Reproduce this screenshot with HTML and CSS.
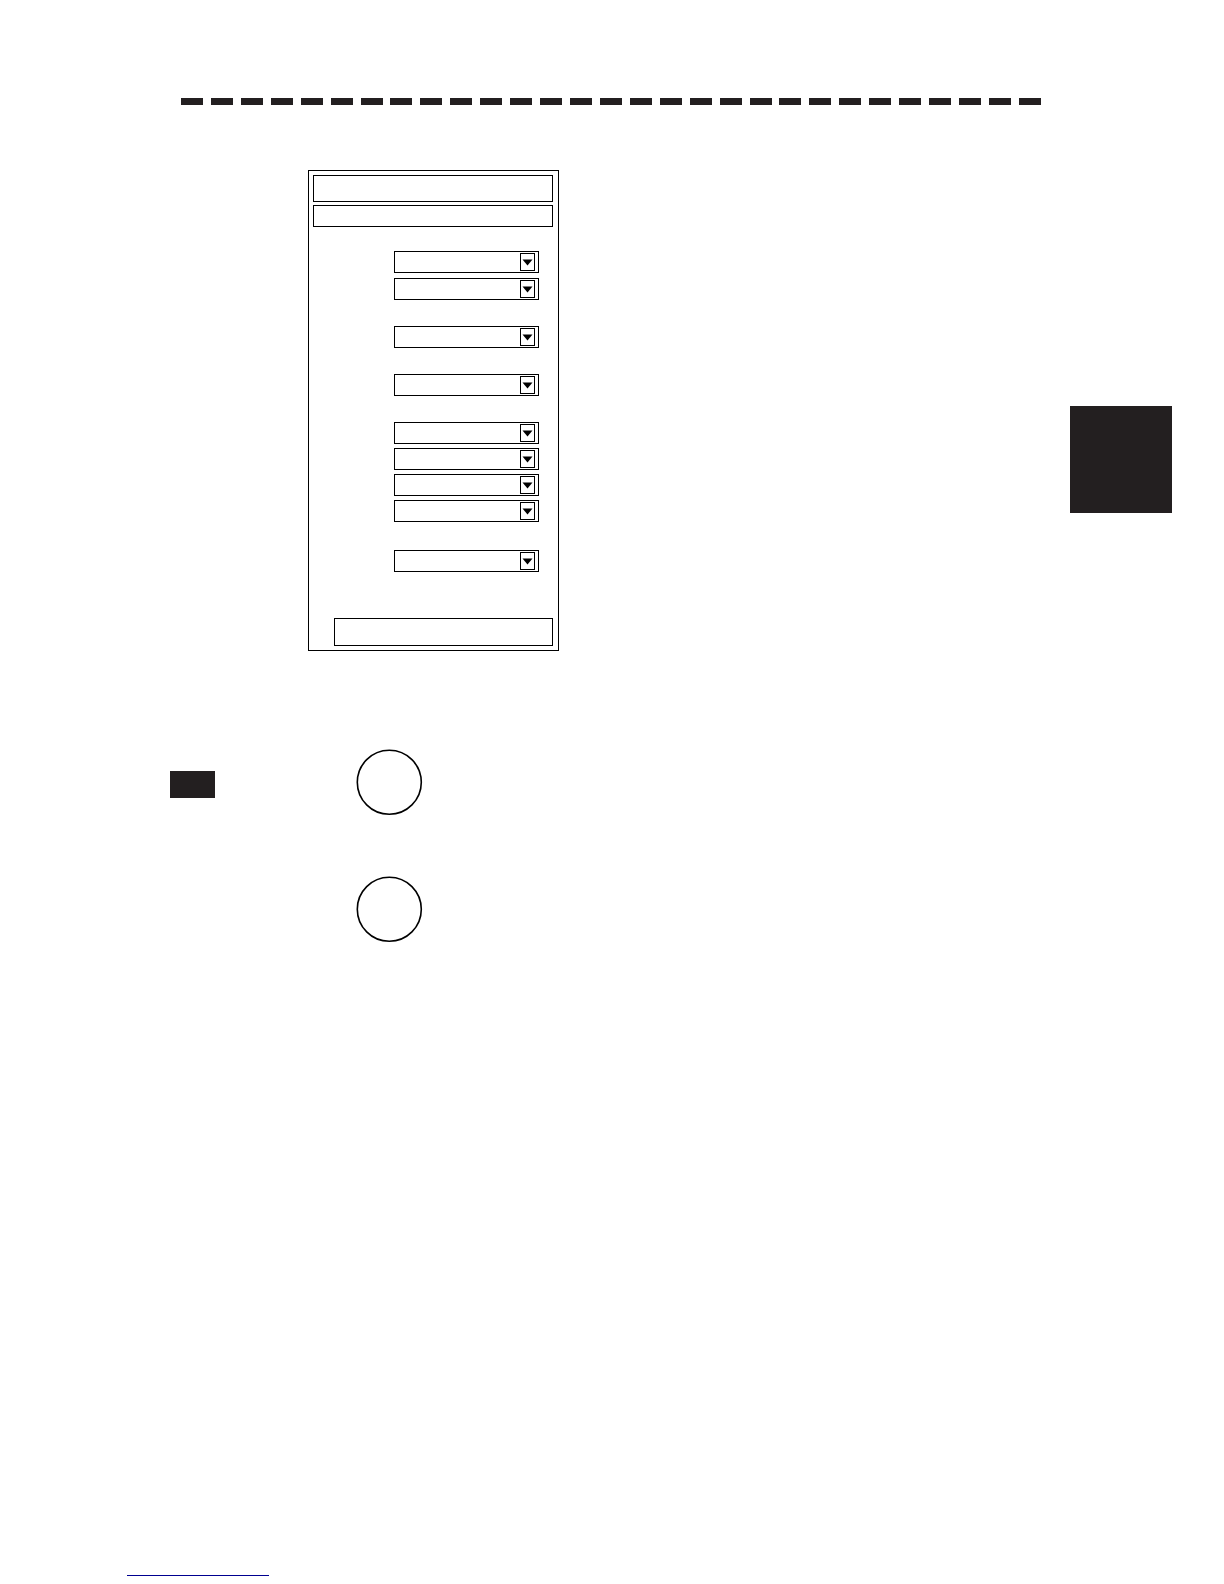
FILE: index.html
```html
<!DOCTYPE html>
<html lang="en">
<head>
<meta charset="utf-8">
<meta name="viewport" content="width=device-width, initial-scale=1">
<title>Settings menu</title>
<link rel="stylesheet" href="styles.css">
</head>
<body>
<div class="page">
  <div class="rule" aria-hidden="true">
    <i></i><i></i><i></i><i></i><i></i><i></i><i></i><i></i><i></i><i></i>
    <i></i><i></i><i></i><i></i><i></i><i></i><i></i><i></i><i></i><i></i>
    <i></i><i></i><i></i><i></i><i></i><i></i><i></i><i></i><i></i>
  </div>

  <main>
    <div class="top">
      <form class="panel">
        <div class="bar bar-title"></div>
        <div class="bar bar-subtitle"></div>
        <div class="groups">
          <div class="group">
            <div class="field"><select aria-label="Setting 1"></select><svg class="arrow" viewBox="0 0 15 18" aria-hidden="true"><rect x=".5" y=".5" width="14" height="17"/><path d="M2.500 6.500h10l-5 6z"/></svg></div>
            <div class="field"><select aria-label="Setting 2"></select><svg class="arrow" viewBox="0 0 15 18" aria-hidden="true"><rect x=".5" y=".5" width="14" height="17"/><path d="M2.500 6.500h10l-5 6z"/></svg></div>
          </div>
          <div class="group">
            <div class="field"><select aria-label="Setting 3"></select><svg class="arrow" viewBox="0 0 15 18" aria-hidden="true"><rect x=".5" y=".5" width="14" height="17"/><path d="M2.500 6.500h10l-5 6z"/></svg></div>
          </div>
          <div class="group">
            <div class="field"><select aria-label="Setting 4"></select><svg class="arrow" viewBox="0 0 15 18" aria-hidden="true"><rect x=".5" y=".5" width="14" height="17"/><path d="M2.500 6.500h10l-5 6z"/></svg></div>
          </div>
          <div class="group group-dense">
            <div class="field"><select aria-label="Setting 5"></select><svg class="arrow" viewBox="0 0 15 18" aria-hidden="true"><rect x=".5" y=".5" width="14" height="17"/><path d="M2.500 6.500h10l-5 6z"/></svg></div>
            <div class="field"><select aria-label="Setting 6"></select><svg class="arrow" viewBox="0 0 15 18" aria-hidden="true"><rect x=".5" y=".5" width="14" height="17"/><path d="M2.500 6.500h10l-5 6z"/></svg></div>
            <div class="field"><select aria-label="Setting 7"></select><svg class="arrow" viewBox="0 0 15 18" aria-hidden="true"><rect x=".5" y=".5" width="14" height="17"/><path d="M2.500 6.500h10l-5 6z"/></svg></div>
            <div class="field"><select aria-label="Setting 8"></select><svg class="arrow" viewBox="0 0 15 18" aria-hidden="true"><rect x=".5" y=".5" width="14" height="17"/><path d="M2.500 6.500h10l-5 6z"/></svg></div>
          </div>
          <div class="group">
            <div class="field"><select aria-label="Setting 9"></select><svg class="arrow" viewBox="0 0 15 18" aria-hidden="true"><rect x=".5" y=".5" width="14" height="17"/><path d="M2.500 6.500h10l-5 6z"/></svg></div>
          </div>
        </div>
        <div class="bar bar-bottom"></div>
      </form>
      <div class="tab"></div>
    </div>

    <div class="keys">
      <div class="tag"></div>
      <button class="key" type="button" aria-label="Key 1"><svg viewBox="0 0 66 66" aria-hidden="true"><circle cx="33.300" cy="33.300" r="32"/></svg></button>
      <button class="key" type="button" aria-label="Key 2"><svg viewBox="0 0 66 66" aria-hidden="true"><circle cx="33.300" cy="33.300" r="32"/></svg></button>
    </div>
  </main>

  <footer class="footer"><a class="link" href="#" aria-label="Contents"></a></footer>
</div>
</body>
</html>
```
FILE: styles.css
```css
* {
  box-sizing: border-box;
}

body {
  margin: 0;
  background: #fff;
  color: #000;
  font-family: "Liberation Sans", Arial, sans-serif;
}

.page {
  display: flex;
  flex-direction: column;
  min-height: 100vh;
  padding-top: 98px;
}

.rule {
  display: flex;
  justify-content: space-between;
  margin: 0 183px 65px 181px;
}

.rule i {
  width: 22px;
  height: 7px;
  background: #231f20;
}

.top {
  display: flex;
  justify-content: space-between;
  align-items: flex-start;
  padding: 0 52px 0 308px;
}

.panel {
  display: flex;
  flex-direction: column;
  width: 251px;
  padding: 4px 5px 4px 4px;
  border: 1px solid #000;
}

.bar {
  border: 1px solid #000;
}

.bar-title {
  height: 27px;
  margin-bottom: 3px;
}

.bar-subtitle {
  height: 22px;
}

.bar-bottom {
  height: 28px;
  margin-left: 21px;
}

.groups {
  display: flex;
  flex-direction: column;
  gap: 26px;
  padding: 24px 14px 46px 81px;
}

.group {
  display: grid;
  gap: 5px;
}

.group-dense {
  gap: 4px;
  padding-bottom: 2px;
}

.field {
  display: grid;
  align-items: center;
}

.field > * {
  grid-area: 1 / 1;
}

.field select {
  appearance: none;
  width: 100%;
  height: 22px;
  margin: 0;
  padding: 0 20px 0 4px;
  border: 1px solid #000;
  border-radius: 0;
  background: #fff;
  font: inherit;
  font-size: 12px;
}

.arrow {
  justify-self: end;
  width: 15px;
  height: 18px;
  margin-right: 4px;
  pointer-events: none;
}

.arrow rect {
  fill: #fff;
  stroke: #000;
}

.tab {
  width: 102px;
  height: 107px;
  margin-top: 236px;
  background: #231f20;
}

.keys {
  display: grid;
  grid-template-columns: 45px 66px;
  gap: 61px 141px;
  align-items: start;
  margin-top: 98px;
  padding-left: 170px;
}

.tag {
  height: 27px;
  margin-top: 22px;
  background: #231f20;
}

.key {
  grid-column: 2;
  height: 66px;
  padding: 0;
  border: 0;
  border-radius: 50%;
  background: none;
}

.key svg {
  display: block;
  width: 66px;
  height: 66px;
  overflow: visible;
}

.key circle {
  fill: none;
  stroke: #000;
  stroke-width: 1.6;
}

.footer {
  display: flex;
  margin-top: auto;
  padding: 0 0 8px 127px;
}

.link {
  width: 142px;
  border-bottom: 1px solid #000090;
}
```
